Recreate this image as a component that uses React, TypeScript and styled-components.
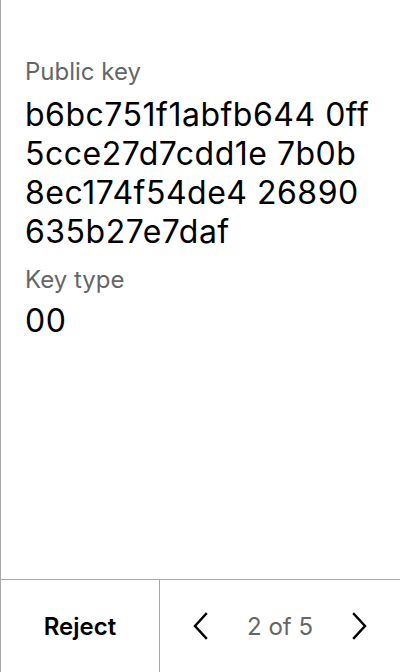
import * as React from 'react';
import styled, { createGlobalStyle } from 'styled-components';

const borderColor = '#a8a8a8';

const GlobalStyle = createGlobalStyle`
  html, body {
    margin: 0;
    padding: 0;
    background: #ffffff;
  }
  body {
    font-family: Inter, "Noto Sans", sans-serif;
    color: #000000;
  }
`;

const Screen = styled.div`
  width: 400px;
  height: 672px;
  box-sizing: border-box;
  border-left: 1px solid ${borderColor};
  display: flex;
  flex-direction: column;
  background: #ffffff;
`;

const Content = styled.div`
  flex: 1;
  padding: 57px 29px 0 24px;
  display: flex;
  flex-direction: column;
`;

const Label = styled.div<{ $gap?: number }>`
  font-size: 24px;
  line-height: 29px;
  color: #666666;
  margin-top: ${(p) => p.$gap ?? 0}px;
`;

const Value = styled.div<{ $gap: number }>`
  font-size: 32px;
  line-height: 39px;
  letter-spacing: 0.5px;
  color: #000000;
  word-break: break-all;
  margin-top: ${(p) => p.$gap}px;
`;

const Footer = styled.div`
  height: 92px;
  border-top: 1px solid ${borderColor};
  display: grid;
  grid-template-columns: 159px 1fr;
`;

const RejectButton = styled.button`
  border: none;
  border-right: 1px solid ${borderColor};
  background: transparent;
  font-family: inherit;
  font-size: 24px;
  font-weight: 600;
  color: #000000;
  cursor: pointer;
`;

const Pager = styled.div`
  display: flex;
  align-items: center;
  justify-content: space-between;
  padding: 0 30px;
`;

const ArrowButton = styled.button`
  border: none;
  background: transparent;
  padding: 0;
  width: 20px;
  height: 30px;
  display: flex;
  align-items: center;
  justify-content: center;
  cursor: pointer;
`;

const PageText = styled.span`
  font-size: 24px;
  color: #666666;
`;

const Chevron = ({ dir }: { dir: 'left' | 'right' }) => (
  <svg width="16" height="28" viewBox="0 0 16 28" fill="none">
    <path
      d={dir === 'left' ? 'M14 2 L3 14 L14 26' : 'M2 2 L13 14 L2 26'}
      stroke="#000"
      strokeWidth="2.4"
      strokeLinecap="square"
    />
  </svg>
);

const App = () => {
  const [page, setPage] = React.useState(2);
  const total = 5;
  return (
    <>
      <GlobalStyle />
      <Screen>
        <Content>
          <Label>Public key</Label>
          <Value $gap={9}>
            b6bc751f1abfb644 0ff5cce27d7cdd1e 7b0b8ec174f54de4 26890635b27e7daf
          </Value>
          <Label $gap={14}>Key type</Label>
          <Value $gap={7}>00</Value>
        </Content>
        <Footer>
          <RejectButton>Reject</RejectButton>
          <Pager>
            <ArrowButton onClick={() => setPage(Math.max(1, page - 1))}>
              <Chevron dir="left" />
            </ArrowButton>
            <PageText>
              {page} of {total}
            </PageText>
            <ArrowButton onClick={() => setPage(Math.min(total, page + 1))}>
              <Chevron dir="right" />
            </ArrowButton>
          </Pager>
        </Footer>
      </Screen>
    </>
  );
};

export default App;
